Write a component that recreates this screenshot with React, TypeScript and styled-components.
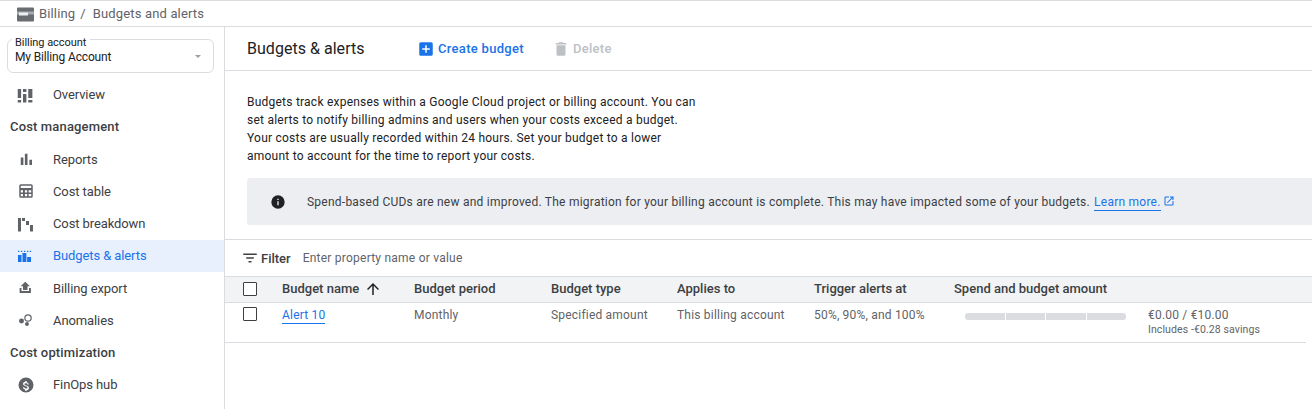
import React from "react"
import styled, { createGlobalStyle } from "styled-components"

const Global = createGlobalStyle`
  html, body { margin: 0; padding: 0; background: #fff; }
  body { font-family: Roboto, "Liberation Sans", sans-serif; color: #202124; overflow: hidden; }
`

const Page = styled.div`
  width: 1312px;
  height: 409px;
  display: flex;
  flex-direction: column;
  overflow: hidden;
  border-top: 1px solid #dadce0;
  box-sizing: border-box;
`

const Crumbs = styled.div`
  height: 25px;
  flex: none;
  display: flex;
  align-items: center;
  padding-left: 17px;
  font-size: 13px;
  letter-spacing: 0.15px;
  color: #5f6368;
  border-bottom: 1px solid #dadce0;
  svg { margin-right: 4px; }
`

const Slash = styled.span`
  margin: 0 7px 0 5px;
`

const Body = styled.div`
  flex: 1;
  display: flex;
  min-height: 0;
`

const Side = styled.aside`
  width: 225px;
  flex: none;
  box-sizing: border-box;
  border-right: 1px solid #dadce0;
  padding-top: 12px;
`

const AccountBox = styled.div`
  position: relative;
  margin: 0 10px 5.5px 7px;
  height: 32px;
  border: 1px solid #dadce0;
  border-radius: 6px;
  display: flex;
  align-items: center;
  padding: 0 12px 0 7px;
  justify-content: space-between;
  font-size: 12px;
  letter-spacing: -0.15px;
  line-height: 14px;
`

const AccountLabel = styled.span`
  position: absolute;
  left: 4px;
  top: -3px;
  padding: 0 4px 0 3px;
  background: #fff;
  font-size: 11px;
  line-height: 11px;
  letter-spacing: -0.05px;
`

const AccountName = styled.span`
  padding-top: 1px;
`

const Caret = styled.span`
  width: 0;
  height: 0;
  border-left: 3.5px solid transparent;
  border-right: 3.5px solid transparent;
  border-top: 3.5px solid #9aa0a6;
`

const NavItem = styled.div<{ $active?: boolean }>`
  height: 32.25px;
  display: flex;
  align-items: center;
  font-size: 13px;
  letter-spacing: -0.1px;
  color: ${(p) => (p.$active ? "#1a73e8" : "#3c4043")};
  background: ${(p) => (p.$active ? "#e8f0fe" : "transparent")};
`

const NavIcon = styled.span`
  width: 53px;
  padding-left: 17px;
  box-sizing: border-box;
  display: flex;
  flex: none;
`

const NavHead = styled.div`
  height: 32.25px;
  display: flex;
  align-items: center;
  padding-left: 10px;
  font-size: 13px;
  font-weight: 500;
  letter-spacing: 0.15px;
  color: #3c4043;
`

const Main = styled.main`
  flex: 1;
  min-width: 0;
`

const Header = styled.div`
  height: 43px;
  display: flex;
  align-items: center;
  padding-left: 22px;
  border-bottom: 1px solid #dadce0;
`

const Title = styled.h1`
  width: 170px;
  margin: 0;
  font-size: 16px;
  font-weight: 400;
  letter-spacing: 0.03px;
  color: #202124;
`

const Action = styled.div<{ $off?: boolean }>`
  display: flex;
  align-items: center;
  gap: 3px;
  font-size: 13px;
  font-weight: 500;
  letter-spacing: 0.3px;
  color: ${(p) => (p.$off ? "#bdc1c6" : "#1a73e8")};
  margin-right: 28px;
`

const Intro = styled.p`
  margin: 22px 0 0 22px;
  width: 452px;
  font-size: 12px;
  line-height: 18px;
  letter-spacing: 0.23px;
  color: #202124;
`

const Banner = styled.div`
  margin: 13px 0 14px 22px;
  height: 47px;
  display: flex;
  align-items: center;
  padding-left: 23px;
  border-radius: 3px 0 0 3px;
  background: #eceef2;
  font-size: 12px;
  letter-spacing: 0.24px;
  color: #3c4043;
  svg { flex: none; }
`

const BannerText = styled.span`
  margin-left: 21px;
  white-space: nowrap;
`

const UnderLink = styled.a`
  color: #1a73e8;
  text-decoration: none;
  padding-bottom: 1px;
  border-bottom: 1px solid #1a73e8;
`

const BannerLink = styled(UnderLink)`
  margin-left: 1px;
`

const ExtIcon = styled.span`
  display: inline-flex;
  margin-left: 2px;
  vertical-align: -1px;
`

const FilterBar = styled.div`
  height: 36px;
  display: flex;
  align-items: center;
  padding-left: 16px;
  border-top: 1px solid #dadce0;
  border-bottom: 1px solid #dadce0;
  font-size: 12px;
`

const FilterLabel = styled.span`
  margin: 0 12px 0 2px;
  font-weight: 500;
  font-size: 13px;
  color: #3c4043;
`

const FilterHint = styled.span`
  color: #5f6368;
  letter-spacing: 0.23px;
`

const TableGrid = `
  display: grid;
  grid-template-columns: 57px 132px 137px 126px 137px 140px 194px 1fr;
  align-items: center;
`

const HeadRow = styled.div`
  ${TableGrid}
  height: 23px;
  padding-bottom: 2px;
  background: #f1f3f4;
  border-bottom: 1px solid #dadce0;
  font-size: 13px;
  font-weight: 500;
  color: #3c4043;
`

const DataRow = styled.div`
  ${TableGrid}
  height: 39px;
  align-items: start;
  margin-right: 6px;
  border-bottom: 1px solid #dadce0;
  font-size: 12px;
  letter-spacing: 0.2px;
  color: #5f6368;
`

const Cell = styled.div`
  display: flex;
  align-items: center;
  white-space: nowrap;
`

const SortIcon = styled.span`
  display: flex;
  margin-left: 5px;
`

const DataCell = styled(Cell)`
  padding-top: 5px;
  line-height: 14px;
`

const CheckCell = styled(Cell)`
  padding-left: 18px;
`

const DataCheckCell = styled(CheckCell)`
  padding-top: 4px;
`

const Check = styled.span`
  width: 12px;
  height: 12px;
  border: 1px solid #3c4043;
  border-radius: 1px;
  background: #fff;
`

const Track = styled.div`
  display: flex;
  gap: 1px;
  width: 161px;
  height: 7px;
  margin: 10px 0 0 11px;
`

const Seg = styled.span`
  flex: 1;
  background: #dadce0;
  &:first-child { border-radius: 3px 0 0 3px; }
  &:last-child { border-radius: 0 3px 3px 0; }
`

const Amount = styled.div`
  padding-top: 5px;
  line-height: 14px;
  white-space: nowrap;
`

const Savings = styled.div`
  font-size: 10.5px;
  line-height: 16px;
  letter-spacing: 0.1px;
`

const Ico = ({ d, fill = "#5f6368", size = 18 }: { d: string; fill?: string; size?: number }) => (
  <svg width={size} height={size} viewBox="0 0 24 24" fill={fill}>
    <path d={d} />
  </svg>
)

const nav = {
  overview: "M1 4h4.5v12H1zM1 18.5h4.5V22H1zM8 4h4.5v4H8zM8 10.5h4.5V22H8zM15 4h5.5v12H15zM15 18.5h5.5V22H15z",
  reports: "M5 10h3.5v10H5zM10.5 5H14v15h-3.5zM16.5 13H20v7h-3.5z",
  table: "M19 3H5a2 2 0 0 0-2 2v14a2 2 0 0 0 2 2h14a2 2 0 0 0 2-2V5a2 2 0 0 0-2-2zM5 5h14v3H5zm3 14H5v-3h3zm0-5H5v-3h3zm5.5 5h-3v-3h3zm0-5h-3v-3h3zM19 19h-3.5v-3H19zm0-5h-3.5v-3H19z",
  breakdown: "M1.3 4h4v18h-4zM6.7 4h4v4h-4zM12 8h4v5.3h-4zM17.3 13.3h4V22h-4z",
  budgets: "M1.3 5h1.8v1.7H1.3zM5.3 5h1.8v1.7H5.3zM9.3 5h1.8v1.7H9.3zM13.3 5h1.8v1.7h-1.8zM17 5h1.8v1.7H17zM1.3 10.7H6V20H1.3zM7.3 8h5.2v12H7.3zM13.5 13.3h5.2V20h-5.2z",
  exportIco: "M8 14.5h6v-5h3.2L11 3.5 4.8 9.5H8zM3.5 12H6v4h10v-4h2.5v6.5h-15z",
  finops: "M12 2a10 10 0 1 0 0 20 10 10 0 0 0 0-20zm1.2 16v1.6h-2.4V18c-1.5-.3-2.8-1.3-2.9-3h1.8c.1.9.8 1.6 2.3 1.6 1.6 0 2-.8 2-1.3 0-.7-.4-1.4-2.3-1.8-2.2-.5-3.6-1.4-3.6-3.2 0-1.5 1.2-2.4 2.7-2.8V6.9h2.4v1.6c1.6.4 2.4 1.6 2.5 2.9h-1.8c0-1-.6-1.6-1.9-1.6-1.3 0-2 .6-2 1.3 0 .7.5 1.1 2.3 1.6 1.8.5 3.6 1.2 3.6 3.4 0 1.6-1.2 2.5-2.7 2.9z",
}

const Anomalies = () => (
  <svg width={18} height={18} viewBox="0 0 24 24" fill="none">
    <circle cx="6" cy="13.3" r="3.3" fill="#5f6368" />
    <circle cx="14.7" cy="9.3" r="4.2" stroke="#5f6368" strokeWidth="1.6" />
    <circle cx="13.3" cy="17.3" r="2.6" fill="#5f6368" />
  </svg>
)

const BillingIcon = () => (
  <svg width={18} height={18} viewBox="0 0 18 18">
    <rect x="0" y="2.5" width="17" height="14" rx="1" fill="#696d72" />
    <rect x="0" y="6.5" width="17" height="3" fill="#a6a9ad" />
    <rect x="2" y="7.5" width="9" height="3" fill="#eceef0" />
  </svg>
)

const SideNav = () => (
  <Side>
    <AccountBox>
      <AccountLabel>Billing account</AccountLabel>
      <AccountName>My Billing Account</AccountName>
      <Caret />
    </AccountBox>
    <NavItem>
      <NavIcon><Ico d={nav.overview} /></NavIcon>Overview
    </NavItem>
    <NavHead>Cost management</NavHead>
    <NavItem>
      <NavIcon><Ico d={nav.reports} /></NavIcon>Reports
    </NavItem>
    <NavItem>
      <NavIcon><Ico d={nav.table} /></NavIcon>Cost table
    </NavItem>
    <NavItem>
      <NavIcon><Ico d={nav.breakdown} /></NavIcon>Cost breakdown
    </NavItem>
    <NavItem $active>
      <NavIcon><Ico d={nav.budgets} fill="#1a73e8" /></NavIcon>Budgets &amp; alerts
    </NavItem>
    <NavItem>
      <NavIcon><Ico d={nav.exportIco} /></NavIcon>Billing export
    </NavItem>
    <NavItem>
      <NavIcon><Anomalies /></NavIcon>Anomalies
    </NavItem>
    <NavHead>Cost optimization</NavHead>
    <NavItem>
      <NavIcon><Ico d={nav.finops} /></NavIcon>FinOps hub
    </NavItem>
  </Side>
)

export default function App() {
  return (
    <Page>
      <Global />
      <Crumbs>
        <BillingIcon />
        Billing<Slash>/</Slash>Budgets and alerts
      </Crumbs>
      <Body>
        <SideNav />
        <Main>
          <Header>
            <Title>Budgets &amp; alerts</Title>
            <Action>
              <Ico fill="#1a73e8" d="M19 3H5a2 2 0 0 0-2 2v14a2 2 0 0 0 2 2h14a2 2 0 0 0 2-2V5a2 2 0 0 0-2-2zm-2 10h-4v4h-2v-4H7v-2h4V7h2v4h4z" />
              Create budget
            </Action>
            <Action $off>
              <Ico fill="#bdc1c6" d="M6 19a2 2 0 0 0 2 2h8a2 2 0 0 0 2-2V7H6zM19 4h-3.5l-1-1h-5l-1 1H5v2h14z" />
              Delete
            </Action>
          </Header>
          <Intro>
            Budgets track expenses within a Google Cloud project or billing account. You can
            set alerts to notify billing admins and users when your costs exceed a budget.
            Your costs are usually recorded within 24 hours. Set your budget to a lower
            amount to account for the time to report your costs.
          </Intro>
          <Banner>
            <Ico size={16} fill="#202124" d="M12 2a10 10 0 1 0 0 20 10 10 0 0 0 0-20zm1 15h-2v-6h2zm0-8h-2V7h2z" />
            <BannerText>
              Spend-based CUDs are new and improved. The migration for your billing account is complete. This may have impacted some of your budgets.{" "}
              <BannerLink>Learn more.</BannerLink>
              <ExtIcon>
                <Ico size={12} fill="#1a73e8" d="M19 19H5V5h7V3H5a2 2 0 0 0-2 2v14a2 2 0 0 0 2 2h14a2 2 0 0 0 2-2v-7h-2zM14 3v2h3.6l-9.8 9.8 1.4 1.4L19 6.4V10h2V3z" />
              </ExtIcon>
            </BannerText>
          </Banner>
          <FilterBar>
            <Ico fill="#3c4043" d="M3 6h18v2H3zM7 11h10v2H7zM10 16h4v2h-4z" />
            <FilterLabel>Filter</FilterLabel>
            <FilterHint>Enter property name or value</FilterHint>
          </FilterBar>
          <HeadRow>
            <CheckCell><Check /></CheckCell>
            <Cell>
              Budget name
              <SortIcon>
                <Ico fill="#202124" d="M4 12l1.41 1.41L11 7.83V20h2V7.83l5.58 5.59L20 12l-8-8z" />
              </SortIcon>
            </Cell>
            <Cell>Budget period</Cell>
            <Cell>Budget type</Cell>
            <Cell>Applies to</Cell>
            <Cell>Trigger alerts at</Cell>
            <Cell>Spend and budget amount</Cell>
            <Cell />
          </HeadRow>
          <DataRow>
            <DataCheckCell><Check /></DataCheckCell>
            <DataCell><UnderLink>Alert 10</UnderLink></DataCell>
            <DataCell>Monthly</DataCell>
            <DataCell>Specified amount</DataCell>
            <DataCell>This billing account</DataCell>
            <DataCell>50%, 90%, and 100%</DataCell>
            <Track><Seg /><Seg /><Seg /><Seg /></Track>
            <Amount>
              €0.00 / €10.00
              <Savings>Includes -€0.28 savings</Savings>
            </Amount>
          </DataRow>
        </Main>
      </Body>
    </Page>
  )
}
